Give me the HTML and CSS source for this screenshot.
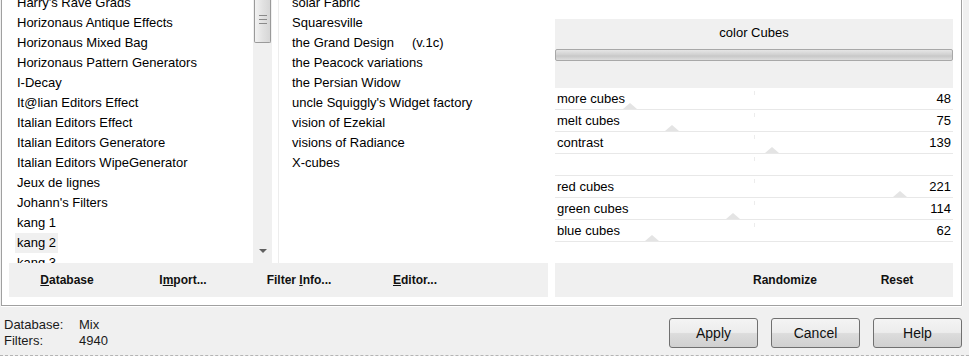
FILE: index.html
```html
<!DOCTYPE html>
<html lang="en">
<head>
    <meta charset="UTF-8">
    <title>Filters Unlimited</title>
    <link rel="stylesheet" href="styles.css">
</head>
<body>
    <div class="group">
        <!-- left side: categories, filters and the database buttons -->
        <div class="browser">
            <div class="lists">
                <div class="list categories">
                    <ul class="items">
                        <li><span>Harry's Rave Grads</span></li>
                        <li><span>Horizonaus Antique Effects</span></li>
                        <li><span>Horizonaus Mixed Bag</span></li>
                        <li><span>Horizonaus Pattern Generators</span></li>
                        <li><span>I-Decay</span></li>
                        <li><span>It@lian Editors Effect</span></li>
                        <li><span>Italian Editors Effect</span></li>
                        <li><span>Italian Editors Generatore</span></li>
                        <li><span>Italian Editors WipeGenerator</span></li>
                        <li><span>Jeux de lignes</span></li>
                        <li><span>Johann's Filters</span></li>
                        <li><span>kang 1</span></li>
                        <li><span class="selected">kang 2</span></li>
                        <li><span>kang 3</span></li>
                    </ul>
                    <div class="scrollbar">
                        <div class="thumb">
                            <svg width="8" height="9" viewBox="0 0 8 9"><path d="M0 0.5h8M0 4.5h8M0 8.5h8" stroke="#8a8a8a" stroke-width="1"/></svg>
                        </div>
                        <div class="arrow-down"></div>
                    </div>
                </div>
                <div class="list filters">
                    <ul class="items">
                        <li>solar Fabric</li>
                        <li>Squaresville</li>
                        <li>the Grand Design&nbsp;&nbsp;&nbsp;&nbsp; (v.1c)</li>
                        <li>the Peacock variations</li>
                        <li>the Persian Widow</li>
                        <li>uncle Squiggly's Widget factory</li>
                        <li>vision of Ezekial</li>
                        <li>visions of Radiance</li>
                        <li>X-cubes</li>
                    </ul>
                </div>
            </div>
            <div class="bar bar-left">
                <span class="bar-btn"><u>D</u>atabase</span>
                <span class="bar-btn">I<u>m</u>port...</span>
                <span class="bar-btn">Filter <u>I</u>nfo...</span>
                <span class="bar-btn"><u>E</u>ditor...</span>
            </div>
        </div>

        <!-- right side: the selected filter and its controls -->
        <div class="settings">
            <div class="controls">
                <div class="filter-head">
                    <div class="filter-title">color Cubes</div>
                    <div class="preview-bar"></div>
                </div>
                <div class="slider-row">
                    <span>more cubes</span><span>48</span>
                    <i class="tick"></i><i class="thumb-mark" style="left: 18.8%"></i>
                </div>
                <div class="slider-row">
                    <span>melt cubes</span><span>75</span>
                    <i class="tick"></i><i class="thumb-mark" style="left: 29.4%"></i>
                </div>
                <div class="slider-row">
                    <span>contrast</span><span>139</span>
                    <i class="tick"></i><i class="thumb-mark" style="left: 54.5%"></i>
                </div>
                <div class="slider-row empty">
                    <i class="tick"></i>
                </div>
                <div class="slider-row">
                    <span>red cubes</span><span>221</span>
                    <i class="tick"></i><i class="thumb-mark" style="left: 86.7%"></i>
                </div>
                <div class="slider-row">
                    <span>green cubes</span><span>114</span>
                    <i class="tick"></i><i class="thumb-mark" style="left: 44.7%"></i>
                </div>
                <div class="slider-row">
                    <span>blue cubes</span><span>62</span>
                    <i class="tick"></i><i class="thumb-mark" style="left: 24.3%"></i>
                </div>
            </div>
            <div class="bar bar-right">
                <span class="bar-btn">Randomize</span>
                <span class="bar-btn">Reset</span>
            </div>
        </div>
    </div>

    <div class="footer">
        <div class="status">
            <div class="status-row"><span class="status-label">Database:</span><span>Mix</span></div>
            <div class="status-row"><span class="status-label">Filters:</span><span>4940</span></div>
        </div>
        <div class="actions">
            <button>Apply</button>
            <button>Cancel</button>
            <button>Help</button>
        </div>
    </div>
</body>
</html>
```

FILE: styles.css
```css
body {
    font-family: "Liberation Sans", Arial, sans-serif;
    font-size: 13px;
    color: #000;
    background-color: #f0f0f0;
    margin: 0;
    padding: 0;
    height: 356px;
    overflow: hidden;
}

/* Etched group box, its top is scrolled off the window */
.group {
    display: grid;
    grid-template-columns: 539px 398px;
    column-gap: 7px;
    margin: 0 7px 0 1px;
    padding: 0 8px 8px 7px;
    background-color: #fff;
    border: 1px solid #a0a0a0;
    border-top: none;
    box-shadow: 0 1px 0 #fff, 1px 0 0 #fff;
}

.browser,
.settings {
    display: grid;
    grid-template-rows: 263px 34px;
}

.lists {
    display: flex;
    gap: 6px;
    overflow: hidden;
}

.list {
    display: flex;
    overflow: hidden;
}

.categories {
    width: 263px;
}

.filters {
    width: 269px;
    border-left: 1px solid #ededed;
}

.items {
    list-style: none;
    margin: -7px 0 0 0;
    padding: 0;
    flex: 1;
}

.items li {
    height: 20px;
    line-height: 20px;
    white-space: nowrap;
}

.categories .items li {
    padding-left: 6px;
}

.categories .items span {
    padding: 0 2px;
    display: inline-block;
}

.categories .items .selected {
    background-color: #f0f0f0;
}

.filters .items li {
    padding-left: 13px;
}

/* Vertical scrollbar of the category list */
.scrollbar {
    width: 19px;
    background-color: #f0f0f0;
    display: flex;
    flex-direction: column;
    justify-content: space-between;
}

.thumb {
    height: 43px;
    margin: 0 1px;
    border: 1px solid #9a9a9a;
    border-top: none;
    border-radius: 0 0 2px 2px;
    background: linear-gradient(to right, #f2f2f2, #e2e2e2 50%, #d6d6d6);
    display: flex;
    align-items: flex-start;
    justify-content: center;
    padding-top: 15px;
    box-sizing: border-box;
}

.arrow-down {
    width: 0;
    height: 0;
    margin: 0 auto 10px;
    border-left: 4px solid transparent;
    border-right: 4px solid transparent;
    border-top: 4px solid #606060;
}

/* Grey button strips under the lists */
.bar {
    background-color: #f0f0f0;
    display: flex;
    align-items: center;
    font-size: 12px;
    font-weight: bold;
    color: #111;
}

.bar-left .bar-btn {
    width: 116px;
    text-align: center;
}

.bar-right {
    justify-content: flex-end;
}

.bar-right .bar-btn {
    width: 112px;
    text-align: center;
}

/* Filter controls */
.controls {
    padding-top: 19px;
}

.filter-head {
    height: 69px;
    background-color: #f0f0f0;
    padding-top: 6px;
    box-sizing: border-box;
}

.filter-title {
    text-align: center;
    line-height: 16px;
}

.preview-bar {
    height: 12px;
    margin-top: 8px;
    border: 1px solid #a8a8a8;
    border-radius: 2px;
    box-sizing: border-box;
    background: linear-gradient(#e6e6e6, #d2d2d2 45%, #c8c8c8 60%, #dedede);
}

.slider-row {
    position: relative;
    height: 21px;
    line-height: 21px;
    padding: 0 2px;
    border-bottom: 1px solid #e8e8e8;
    display: flex;
    justify-content: space-between;
}

.slider-row span {
    position: relative;
    z-index: 1;
}

.tick {
    position: absolute;
    left: 50%;
    top: 3px;
    width: 1px;
    height: 4px;
    background-color: #ececec;
}

.thumb-mark {
    position: absolute;
    bottom: 0;
    width: 0;
    height: 0;
    margin-left: -7px;
    border-left: 7px solid transparent;
    border-right: 7px solid transparent;
    border-bottom: 6px solid #e4e4e4;
}

/* Status line and dialog buttons */
.footer {
    height: 50px;
    box-sizing: border-box;
    padding: 11px 7px 0 4px;
    border-bottom: 1px dashed #b4b4b4;
    display: flex;
    justify-content: space-between;
    align-items: flex-start;
}

.status-row {
    line-height: 16px;
    color: #1a1a1a;
}

.status-label {
    display: inline-block;
    width: 75px;
}

.actions {
    display: flex;
    gap: 13px;
    margin-top: 1px;
}

button {
    width: 89px;
    height: 30px;
    font-family: "Liberation Sans", Arial, sans-serif;
    font-size: 14px;
    color: #111;
    border: 1px solid #707070;
    border-radius: 3px;
    background: linear-gradient(#f4f4f4, #ececec 48%, #dcdcdc 52%, #d0d0d0);
}
```
